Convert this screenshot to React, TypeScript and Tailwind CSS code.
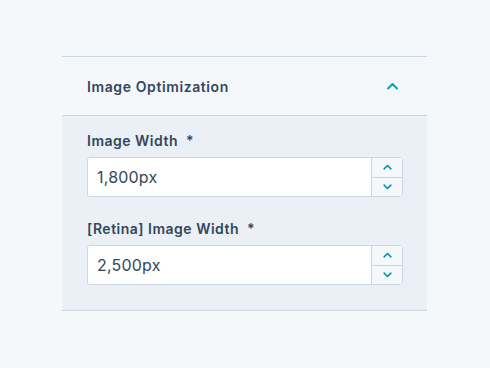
import React from 'react';

const ChevronUp = ({ className }: { className?: string }) => (
  <svg viewBox="0 0 12 8" className={className} fill="none">
    <path d="M1.5 6.5L6 2l4.5 4.5" stroke="currentColor" strokeWidth="2" strokeLinecap="round" strokeLinejoin="round" />
  </svg>
);

const ChevronDown = ({ className }: { className?: string }) => (
  <svg viewBox="0 0 12 8" className={className} fill="none">
    <path d="M1.5 1.5L6 6l4.5-4.5" stroke="currentColor" strokeWidth="2" strokeLinecap="round" strokeLinejoin="round" />
  </svg>
);

interface NumberFieldProps {
  label: string;
  value: string;
}

const NumberField: React.FC<NumberFieldProps> = ({ label, value }) => (
  <div>
    <label className="block h-[20px] text-[14px] leading-[20px] font-semibold tracking-[0.5px] text-[#33475b]">
      {label}
      <span className="ml-[8px]">*</span>
    </label>
    <div className="mt-[6px] flex h-[40px] w-[316px] rounded-[3px] border border-[#cbd6e2] bg-white">
      <div className="flex flex-1 items-center pl-[9px] text-[16px] tracking-[0.2px] text-[#33475b]">{value}</div>
      <div className="flex w-[31px] flex-col border-l border-[#cbd6e2] bg-[#f5f8fa]">
        <button className="flex flex-1 items-center justify-center border-b border-[#cbd6e2] text-[#0091ae]">
          <ChevronUp className="w-[9px] h-[6px]" />
        </button>
        <button className="flex flex-1 items-center justify-center text-[#0091ae]">
          <ChevronDown className="w-[9px] h-[6px]" />
        </button>
      </div>
    </div>
  </div>
);

export default function App() {
  return (
    <div
      className="w-[490px] h-[368px] bg-[#f5f8fa] pt-[56px] pl-[62px]"
      style={{ fontFamily: 'Inter, "Noto Sans", sans-serif' }}
    >
      <div className="w-[365px] border-t border-b border-[#cbd6e2]">
        <div className="flex h-[59px] items-center justify-between border-b border-[#cbd6e2] pl-[25px] pr-[28px]">
          <span className="text-[14px] font-semibold tracking-[0.6px] text-[#33475b]">Image Optimization</span>
          <ChevronUp className="w-[13px] h-[8px] text-[#00a4bd]" />
        </div>
        <div className="flex flex-col gap-[22px] bg-[#eaf0f6] pl-[25px] pr-[24px] pt-[15px] pb-[25px]">
          <NumberField label="Image Width" value="1,800px" />
          <NumberField label="[Retina] Image Width" value="2,500px" />
        </div>
      </div>
    </div>
  );
}
